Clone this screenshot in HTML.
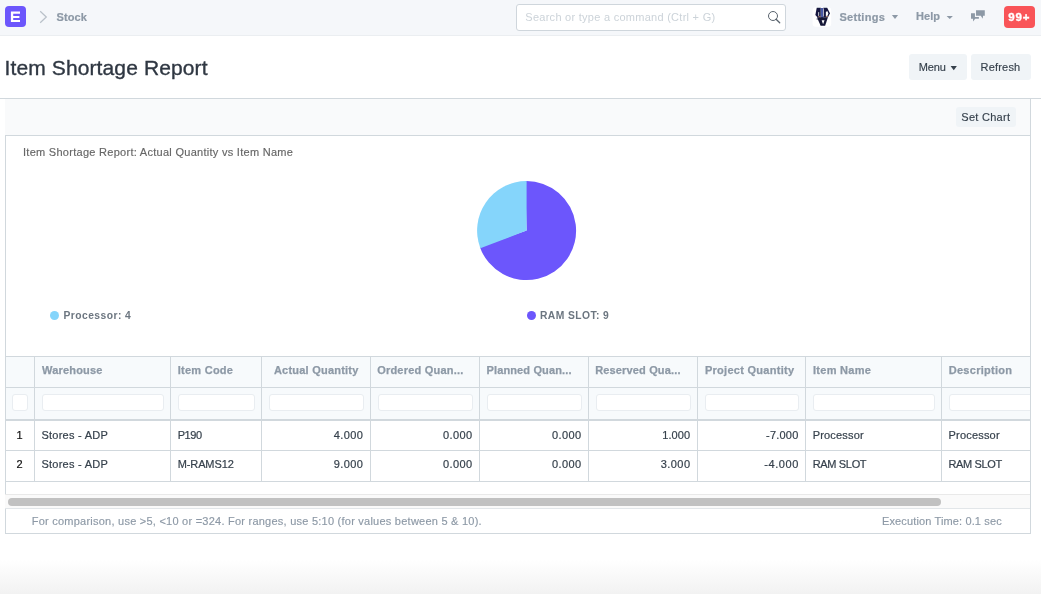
<!DOCTYPE html>
<html><head><meta charset="utf-8">
<style>
*{box-sizing:border-box;margin:0;padding:0}
html,body{width:1041px;height:594px;overflow:hidden;background:#fff}
body{font-family:"Liberation Sans",sans-serif;position:relative;color:#36414c}
.a{position:absolute;white-space:nowrap;line-height:1}
#nav{left:0;top:0;width:1041px;height:36px;background:#f5f7fa;border-bottom:1px solid #ebeef1}
#logo{left:5px;top:6px;width:21px;height:21.3px;border-radius:4px;background:#6c56fc}
.nb{font-weight:bold;font-size:11px;color:#8d99a6;-webkit-text-stroke:0.2px #8d99a6}
#search{left:516px;top:3.8px;width:270px;height:26.8px;border:1px solid #cfd6dc;border-radius:3px;background:#fff}
#title{left:4.5px;top:57px;font-size:21px;letter-spacing:0.12px;color:#2f3742;-webkit-text-stroke:0.35px #2f3742}
.btn{background:#f0f4f7;border-radius:3px;color:#36414c;font-size:12px;text-align:center}
#band{left:5px;top:99px;width:1026px;height:36px;background:#f9fafb;border-right:1px solid #d1d8dd}
#hline{left:0;top:98px;width:1041px;height:1px;background:#d1d8dd}
#box{left:5px;top:135px;width:1026px;height:399px;border:1px solid #d1d8dd;border-top:1px solid #d1d8dd}
.t11{font-size:11px;-webkit-text-stroke:0.15px}
.grey{color:#8d99a6}
.hl{background:#d1d8dd}
#thead{left:6px;top:357px;width:1024px;height:62px;background:#f7fafc}
.fi{background:#fff;border:1px solid #e9edf1;border-radius:3px;height:16.5px;top:394.3px}
.hd{font-weight:bold;font-size:11px;color:#8d99a6;top:364.6px;-webkit-text-stroke:0.25px #8d99a6}
.r1{top:429.9px;font-size:11px;-webkit-text-stroke:0.2px}
.r2{top:458.7px;font-size:11px;-webkit-text-stroke:0.2px}
#grad{left:0;top:560px;width:1041px;height:34px;background:linear-gradient(#fff,#f2f2f2)}
#w{position:absolute;left:0;top:0;width:1041px;height:594px;overflow:hidden;will-change:transform;background:#fff}
</style></head><body><div id="w">
<div class="a" id="nav"></div>
<div class="a" id="logo"></div>
<svg class="a" style="left:5px;top:6px" width="21" height="21" viewBox="5 6 21 21"><path d="M10.9 11.6 H20 V13.8 H13.2 V16 H19.4 V18.1 H13.2 V20 H20 V22.1 H10.9 Z" fill="#fff"/></svg>
<svg class="a" style="left:36px;top:8px" width="14" height="18" viewBox="36 8 14 18"><path d="M40.2 11.3 L46.3 17 L40.2 22.7" fill="none" stroke="#b9c1c9" stroke-width="1.25"/></svg>
<div class="a nb" style="left:56.5px;top:12px;letter-spacing:0.13px">Stock</div>
<div class="a" id="search"></div>
<div class="a" style="left:525.3px;top:12px;font-size:11px;letter-spacing:0.27px;color:#ccd3d9">Search or type a command (Ctrl + G)</div>
<svg class="a" style="left:765px;top:8px" width="18" height="18" viewBox="765 8 18 18"><circle cx="773" cy="16" r="4.5" fill="none" stroke="#59636d" stroke-width="1"/><path d="M776.1 19.3 L779.7 22.8" stroke="#59636d" stroke-width="1.3" stroke-linecap="round"/></svg>
<svg class="a" style="left:808px;top:4px" width="28" height="26" viewBox="0 0 640 594">
<defs><filter id="bl" x="-10%" y="-10%" width="120%" height="120%"><feGaussianBlur stdDeviation="9"/></filter></defs>
<rect x="105" y="72" width="425" height="450" rx="70" fill="#fff"/>
<g filter="url(#bl)">
<path d="M200 88 L292 88 L292 305 L215 305 L168 250 Z" fill="#15183f"/>
<path d="M236 190 L254 182 L254 268 L236 275 Z" fill="#fff"/>
<path d="M292 92 L350 92 L346 318 L300 318 Z" fill="#4a59a6"/>
<path d="M350 88 L438 88 L502 212 L458 305 L350 305 Z" fill="#15183f"/>
<path d="M350 100 L364 100 L364 282 L350 282 Z" fill="#e8e8f4"/>
<path d="M408 178 L448 165 L464 215 L447 268 L408 272 Z" fill="#fff"/>
<ellipse cx="262" cy="292" rx="32" ry="14" fill="#c58a72"/>
<ellipse cx="430" cy="287" rx="26" ry="13" fill="#c58a72"/>
<path d="M205 305 L455 305 L392 497 L288 497 Z" fill="#121436"/>
<path d="M185 345 L215 330 L225 360 Z" fill="#121436"/>
<path d="M312 372 L378 372 L345 460 Z" fill="#fff"/>
</g></svg>
<div class="a nb" style="left:839.5px;top:12px;letter-spacing:0.27px">Settings</div>
<svg class="a" style="left:890px;top:13px" width="10" height="8" viewBox="0 0 10 8"><path d="M1.9 2 L8.1 2 L5 6 Z" fill="#8d99a6"/></svg>
<div class="a nb" style="left:916px;top:11.2px;letter-spacing:0.08px">Help</div>
<svg class="a" style="left:945px;top:14px" width="10" height="8" viewBox="0 0 10 8"><path d="M1.6 2 L7.9 2 L4.75 5 Z" fill="#8d99a6"/></svg>
<svg class="a" style="left:964px;top:4px" width="28" height="26" viewBox="0 0 640 594">
<path d="M275 140 H475 V270 H437 L425 338 L385 270 H275 Z" fill="#8d99a6"/>
<path d="M160 210 H250 V298 H340 V335 H255 L210 398 L205 335 H160 Z" fill="#8d99a6"/>
</svg>
<div class="a" style="left:1004px;top:6px;width:31px;height:22px;border-radius:4px;background:#f95458"></div>
<div class="a" style="left:1008.3px;top:11.6px;font-size:11.5px;letter-spacing:0.8px;font-weight:bold;color:#fff;-webkit-text-stroke:0.35px #fff">99+</div>

<div class="a" id="title">Item Shortage Report</div>
<div class="a btn" style="left:909px;top:54px;width:58px;height:26px"></div>
<div class="a" style="left:918.7px;top:62px;font-size:11px;letter-spacing:-0.1px;color:#36414c;-webkit-text-stroke:0.15px">Menu</div>
<svg class="a" style="left:949px;top:64px" width="10" height="8" viewBox="0 0 10 8"><path d="M1.6 2 L7.9 2 L4.75 6.2 Z" fill="#36414c"/></svg>
<div class="a btn" style="left:971px;top:54px;width:60px;height:26px"></div>
<div class="a" style="left:980.5px;top:62px;font-size:11px;letter-spacing:0.2px;color:#36414c;-webkit-text-stroke:0.15px">Refresh</div>

<div class="a" id="hline"></div>
<div class="a" id="band"></div>
<div class="a btn" style="left:956px;top:107px;width:60px;height:20px"></div>
<div class="a" style="left:961.3px;top:111.6px;font-size:11px;letter-spacing:0.28px;color:#36414c;-webkit-text-stroke:0.15px">Set Chart</div>
<div class="a" id="box"></div>
<div class="a t11" style="left:23px;top:146.7px;letter-spacing:0.28px;color:#666">Item Shortage Report: Actual Quantity vs Item Name</div>
<svg class="a" style="left:470px;top:175px" width="112" height="112" viewBox="470 175 112 112">
<path d="M526.6 230.6 L479.87 246.94 A49.5 49.5 0 1 0 525.30 181.12 Z" fill="#6c56fc"/>
<path id="slice" d="M526.6 230.6 L526.6 181.10 A49.5 49.5 0 0 0 480.32 248.15 Z" fill="#85d5fb"/>
</svg>
<div class="a" style="left:50px;top:311.25px;width:9.1px;height:9.1px;border-radius:50%;background:#85d5fb"></div>
<div class="a" style="left:63.5px;top:310.5px;font-size:10.3px;letter-spacing:0.45px;font-weight:bold;color:#6c7680">Processor: 4</div>
<div class="a" style="left:526.6px;top:311.25px;width:9.1px;height:9.1px;border-radius:50%;background:#6c56fc"></div>
<div class="a" style="left:540px;top:310.5px;font-size:10.3px;letter-spacing:0.42px;font-weight:bold;color:#6c7680">RAM SLOT: 9</div>

<div class="a" id="thead"></div>
<div class="a hl" style="left:5px;top:356px;width:1026px;height:1px"></div>
<div class="a hl" style="left:5px;top:387px;width:1026px;height:1px"></div>
<div class="a hl" style="left:5px;top:419px;width:1026px;height:2px"></div>
<div class="a hl" style="left:5px;top:450px;width:1026px;height:1px"></div>
<div class="a hl" style="left:5px;top:481px;width:1026px;height:1px"></div>
<div class="a hl" style="left:34px;top:356px;width:1px;height:126px"></div>
<div class="a hl" style="left:170px;top:356px;width:1px;height:126px"></div>
<div class="a hl" style="left:261px;top:356px;width:1px;height:126px"></div>
<div class="a hl" style="left:370px;top:356px;width:1px;height:126px"></div>
<div class="a hl" style="left:479px;top:356px;width:1px;height:126px"></div>
<div class="a hl" style="left:588px;top:356px;width:1px;height:126px"></div>
<div class="a hl" style="left:697px;top:356px;width:1px;height:126px"></div>
<div class="a hl" style="left:805px;top:356px;width:1px;height:126px"></div>
<div class="a hl" style="left:941px;top:356px;width:1px;height:126px"></div>
<div class="a fi" style="left:12.3px;width:15.4px"></div>
<div class="a fi" style="left:41.5px;width:122px"></div>
<div class="a fi" style="left:177.5px;width:77px"></div>
<div class="a fi" style="left:268.5px;width:95px"></div>
<div class="a fi" style="left:377.5px;width:95px"></div>
<div class="a fi" style="left:486.5px;width:95px"></div>
<div class="a fi" style="left:595.5px;width:95px"></div>
<div class="a fi" style="left:704.5px;width:94px"></div>
<div class="a fi" style="left:812.5px;width:122px"></div>
<div class="a fi" style="left:948.5px;width:105px"></div>
<div class="a hd" style="left:42.00px;letter-spacing:0.189px">Warehouse</div>
<div class="a hd" style="left:177.65px;letter-spacing:0.270px">Item Code</div>
<div class="a hd" style="left:273.90px;letter-spacing:0.229px">Actual Quantity</div>
<div class="a hd" style="left:377.15px;letter-spacing:0.222px">Ordered Quan...</div>
<div class="a hd" style="left:486.50px;letter-spacing:0.134px">Planned Quan...</div>
<div class="a hd" style="left:595.15px;letter-spacing:0.156px">Reserved Qua...</div>
<div class="a hd" style="left:704.90px;letter-spacing:0.285px">Project Quantity</div>
<div class="a hd" style="left:812.90px;letter-spacing:0.308px">Item Name</div>
<div class="a hd" style="left:948.80px;letter-spacing:0.258px">Description</div>
<div class="a r1" style="left:16.60px;letter-spacing:0.000px;color:#111">1</div>
<div class="a r1" style="left:41.40px;letter-spacing:0.265px;color:#36414c">Stores - ADP</div>
<div class="a r1" style="left:177.70px;letter-spacing:-0.450px;color:#36414c">P190</div>
<div class="a r1" style="left:333.80px;letter-spacing:0.417px;color:#36414c">4.000</div>
<div class="a r1" style="left:443.00px;letter-spacing:0.417px;color:#36414c">0.000</div>
<div class="a r1" style="left:552.00px;letter-spacing:0.418px;color:#36414c">0.000</div>
<div class="a r1" style="left:662.30px;letter-spacing:0.043px;color:#36414c">1.000</div>
<div class="a r1" style="left:766.00px;letter-spacing:0.220px;color:#36414c">-7.000</div>
<div class="a r1" style="left:812.70px;letter-spacing:0.184px;color:#36414c">Processor</div>
<div class="a r1" style="left:948.50px;letter-spacing:0.196px;color:#36414c">Processor</div>
<div class="a r2" style="left:16.50px;letter-spacing:0.000px;color:#111">2</div>
<div class="a r2" style="left:41.40px;letter-spacing:0.265px;color:#36414c">Stores - ADP</div>
<div class="a r2" style="left:177.70px;letter-spacing:-0.106px;color:#36414c">M-RAMS12</div>
<div class="a r2" style="left:333.80px;letter-spacing:0.417px;color:#36414c">9.000</div>
<div class="a r2" style="left:443.00px;letter-spacing:0.417px;color:#36414c">0.000</div>
<div class="a r2" style="left:552.00px;letter-spacing:0.418px;color:#36414c">0.000</div>
<div class="a r2" style="left:660.75px;letter-spacing:0.430px;color:#36414c">3.000</div>
<div class="a r2" style="left:764.20px;letter-spacing:0.580px;color:#36414c">-4.000</div>
<div class="a r2" style="left:812.70px;letter-spacing:-0.333px;color:#36414c">RAM SLOT</div>
<div class="a r2" style="left:948.50px;letter-spacing:-0.361px;color:#36414c">RAM SLOT</div>
<div class="a" style="left:5px;top:494px;width:1025px;height:15px;background:#fafafa;border-top:1px solid #e9e9e9"></div>
<div class="a" style="left:8px;top:498px;width:932.7px;height:7.8px;border-radius:4px;background:#c1c1c1"></div>
<div class="a" style="left:5px;top:508px;width:1026px;height:1px;background:#e2e6e9"></div>
<div class="a" style="left:6px;top:510px;width:1024px;height:23px;background:#fff"></div>
<div class="a t11 grey" style="left:31.7px;top:516px;letter-spacing:0.24px">For comparison, use &gt;5, &lt;10 or =324. For ranges, use 5:10 (for values between 5 &amp; 10).</div>
<div class="a t11 grey" style="left:882px;top:516px;letter-spacing:0.13px">Execution Time: 0.1 sec</div>
<div class="a" style="left:1031px;top:99px;width:10px;height:450px;background:#fff"></div>
<div class="a hl" style="left:1030px;top:98px;width:1px;height:436px"></div>
<div class="a" id="grad"></div>
</div></body></html>
